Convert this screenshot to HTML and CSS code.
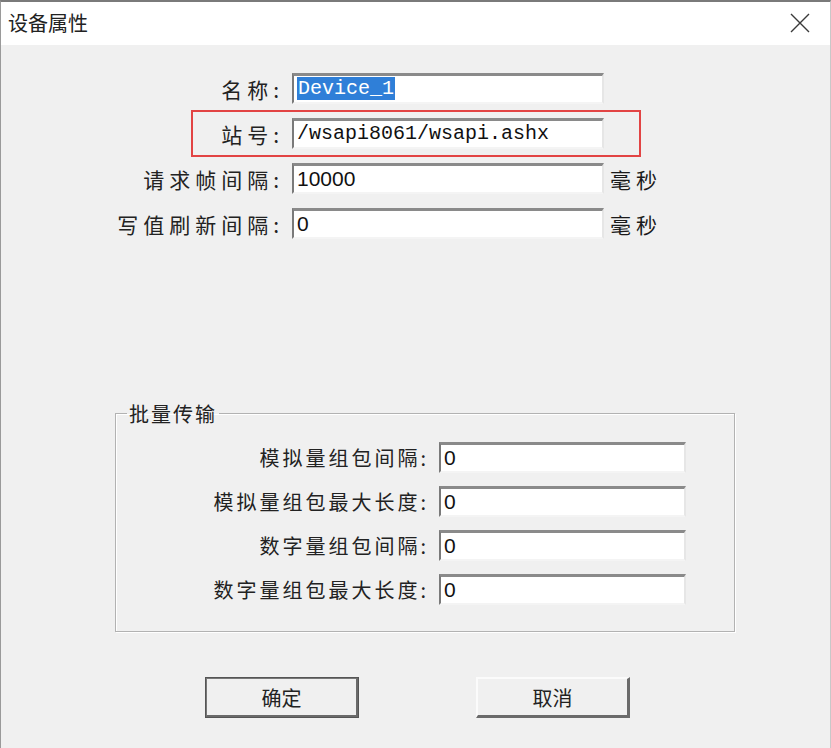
FILE: index.html
```html
<!DOCTYPE html>
<html>
<head>
    <meta charset="utf-8">
    <title>设备属性</title>
    <link rel="stylesheet" href="styles.css">
</head>
<body>
    <div class="window">
        <div class="titlebar">
            <span class="title">设备属性</span>
            <svg class="close" width="20" height="20" viewBox="0 0 20 20">
                <path d="M1 1L19 19M19 1L1 19" stroke="#3a3a3a" stroke-width="1.4" fill="none"/>
            </svg>
        </div>
        <div class="content">
            <div class="fields">
                <div class="row">
                    <label class="label">名称:</label>
                    <div class="input mono"><span class="sel">Device_1</span></div>
                </div>
                <div class="row marked">
                    <label class="label">站号:</label>
                    <div class="input mono">/wsapi8061/wsapi.ashx</div>
                </div>
                <div class="row">
                    <label class="label">请求帧间隔:</label>
                    <div class="input">10000</div>
                    <span class="unit">毫秒</span>
                </div>
                <div class="row">
                    <label class="label">写值刷新间隔:</label>
                    <div class="input">0</div>
                    <span class="unit">毫秒</span>
                </div>
            </div>

            <fieldset class="group">
                <legend>批量传输</legend>
                <div class="row">
                    <label class="label">模拟量组包间隔:</label>
                    <div class="input small">0</div>
                </div>
                <div class="row">
                    <label class="label">模拟量组包最大长度:</label>
                    <div class="input small">0</div>
                </div>
                <div class="row">
                    <label class="label">数字量组包间隔:</label>
                    <div class="input small">0</div>
                </div>
                <div class="row">
                    <label class="label">数字量组包最大长度:</label>
                    <div class="input small">0</div>
                </div>
            </fieldset>

            <div class="buttons">
                <button class="btn default">确定</button>
                <button class="btn">取消</button>
            </div>
        </div>
    </div>
</body>
</html>
```

FILE: styles.css
```css
body {
    margin: 0;
    background: #f0f0f0;
    font-family: "Noto Sans CJK SC", "Noto Sans", sans-serif;
    color: #1a1a1a;
}
.window {
    width: 831px;
    height: 748px;
    box-sizing: border-box;
    border-top: 2px solid #7a7a7a;
    border-left: 1px solid #9a9a9a;
    border-right: 1px solid #c8c8c8;
    background: #f0f0f0;
    overflow: hidden;
}
.titlebar {
    height: 43px;
    background: #fff;
    display: flex;
    align-items: center;
    justify-content: space-between;
    padding: 0 20px 0 7px;
}
.title {
    font-size: 20px;
    color: #222;
    margin-top: -2px;
}
.close {
    margin-top: -1px;
}
.content {
    padding-top: 28px;
}
.fields {
    margin-left: 91px;
}
.row {
    display: flex;
    align-items: center;
    height: 31px;
    margin-bottom: 14px;
    position: relative;
}
.label {
    width: 200px;
    padding-right: 8px;
    box-sizing: border-box;
    text-align: right;
    font-size: 21px;
    letter-spacing: 5px;
    color: #222;
}
.input {
    width: 312px;
    height: 31px;
    box-sizing: border-box;
    background: #fff;
    border-top: 3px solid #8a8a8a;
    border-left: 2px solid #7a7a7a;
    border-right: 2px solid #e6e6e6;
    border-bottom: 2px solid #f4f4f4;
    font-family: "Liberation Sans", sans-serif;
    font-size: 21px;
    line-height: 26px;
    padding-left: 3px;
    color: #111;
    white-space: nowrap;
}
.mono {
    font-family: "Liberation Mono", monospace;
    font-size: 20px;
}
.sel {
    background: #2f7fd8;
    color: #fff;
    padding: 0 1px;
}
.unit {
    margin-left: 6px;
    font-size: 21px;
    letter-spacing: 5px;
}
.marked::after {
    content: "";
    position: absolute;
    left: 99px;
    top: -8px;
    width: 450px;
    height: 47px;
    box-sizing: border-box;
    border: 2px solid #e24444;
}
.group {
    margin: 160px 0 0 114px;
    width: 620px;
    height: 233px;
    box-sizing: border-box;
    border: 1px solid #b2b2b2;
    box-shadow: inset 1px 1px 0 #fff, 1px 1px 0 #fff;
    padding: 14px 0 0 0;
}
.group legend {
    font-size: 20px;
    letter-spacing: 2px;
    padding: 0 2px;
    margin-left: 11px;
    color: #222;
}
.group .row {
    margin-bottom: 13px;
}
.group .label {
    width: 323px;
    padding-right: 10px;
    font-size: 20px;
    letter-spacing: 3px;
}
.input.small {
    width: 247px;
}
.buttons {
    display: flex;
    gap: 117px;
    margin: 45px 0 0 204px;
}
.btn {
    width: 154px;
    height: 41px;
    background: #f0f0f0;
    font-family: "Noto Sans CJK SC", sans-serif;
    font-size: 20px;
    color: #222;
    border: none;
    border-top: 2px solid #fbfbfb;
    border-left: 2px solid #fbfbfb;
    border-right: 3px solid #6a6a6a;
    border-bottom: 3px solid #6a6a6a;
    padding: 0;
}
.btn.default {
    outline: 1px solid #555;
    outline-offset: -1px;
    border-top: 2px solid #777;
    border-left: 2px solid #777;
}
```
